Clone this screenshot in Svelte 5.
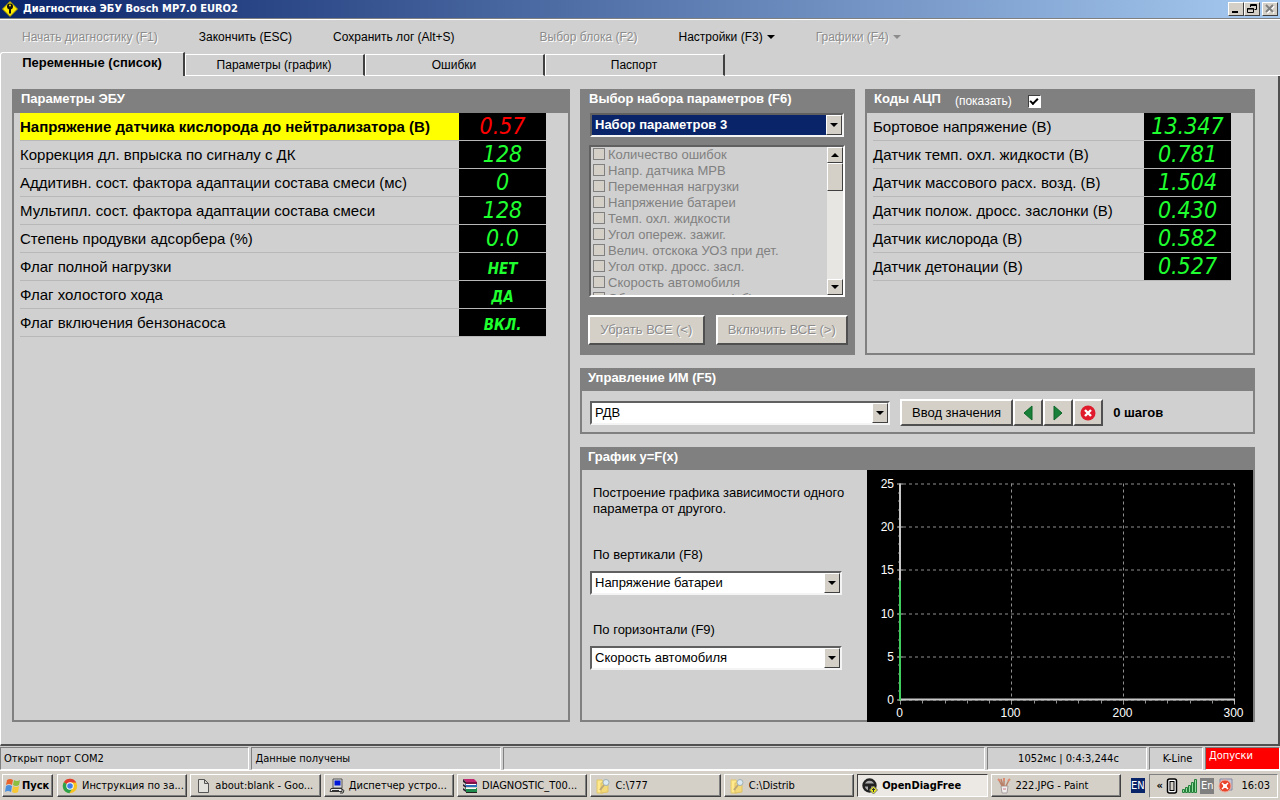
<script>
  const MENU = [
    { label: 'Начать диагностику (F1)', disabled: true },
    { label: 'Закончить (ESC)' },
    { label: 'Сохранить лог (Alt+S)' },
    { label: 'Выбор блока (F2)', disabled: true, group: true },
    { label: 'Настройки (F3)', arrow: true },
    { label: 'Графики (F4)', disabled: true, arrow: true },
  ];

  const TABS = ['Переменные (список)', 'Параметры (график)', 'Ошибки', 'Паспорт'];

  const PARAMS = [
    { name: 'Напряжение датчика кислорода до нейтрализатора (В)', value: '0.57', alert: true },
    { name: 'Коррекция дл. впрыска по сигналу с ДК', value: '128' },
    { name: 'Аддитивн. сост. фактора адаптации состава смеси (мс)', value: '0' },
    { name: 'Мультипл. сост. фактора адаптации состава смеси', value: '128' },
    { name: 'Степень продувки адсорбера (%)', value: '0.0' },
    { name: 'Флаг полной нагрузки', value: 'НЕТ', word: true },
    { name: 'Флаг холостого хода', value: 'ДА', word: true },
    { name: 'Флаг включения бензонасоса', value: 'ВКЛ.', word: true },
  ];

  const ADC = [
    { name: 'Бортовое напряжение (В)', value: '13.347' },
    { name: 'Датчик темп. охл. жидкости (В)', value: '0.781' },
    { name: 'Датчик массового расх. возд. (В)', value: '1.504' },
    { name: 'Датчик полож. дросс. заслонки (В)', value: '0.430' },
    { name: 'Датчик кислорода (В)', value: '0.582' },
    { name: 'Датчик детонации (В)', value: '0.527' },
  ];

  const CHANNELS = [
    'Количество ошибок',
    'Напр. датчика МРВ',
    'Переменная нагрузки',
    'Напряжение батареи',
    'Темп. охл. жидкости',
    'Угол опереж. зажиг.',
    'Велич. отскока УОЗ при дет.',
    'Угол откр. дросс. засл.',
    'Скорость автомобиля',
    'Обороты двигателя (об)',
  ];

  const TASKS = [
    { icon: 'chrome', label: 'Инструкция по за...' },
    { icon: 'page', label: 'about:blank - Goo...' },
    { icon: 'computer', label: 'Диспетчер устро...' },
    { icon: 'rar', label: 'DIAGNOSTIC_T00...' },
    { icon: 'folder', label: 'C:\\777' },
    { icon: 'folder', label: 'C:\\Distrib' },
    { icon: 'wheel', label: 'OpenDiagFree', active: true },
    { icon: 'paint', label: '222.JPG - Paint' },
  ];

  const Y_TICKS = [0, 5, 10, 15, 20, 25];
  const X_TICKS = [0, 100, 200, 300];
  const yPos = v => Math.round(229 - v * 8.64) + 0.5;
  const xPos = v => Math.round(33 + v * 1.114) + 0.5;

  let tab = $state(0);
  let showAdc = $state(true);
</script>

{#snippet icon(kind)}
  <svg class="icon" width="16" height="16" viewBox="0 0 16 16" aria-hidden="true">
    {#if kind === 'chrome'}
      <circle cx="8" cy="8" r="7.2" fill="#f9c31f" />
      <path d="M8 8L1.8 4.3A7.2 7.2 0 0 1 14.3 4.6H8z" fill="#e03c31" />
      <path d="M8 8L1.8 4.3A7.2 7.2 0 0 0 7.3 15.2L10.8 9.8z" fill="#2da14c" />
      <circle cx="8" cy="8" r="3.7" fill="#fff" />
      <circle cx="8" cy="8" r="2.8" fill="#3f7ee8" />
    {:else if kind === 'page'}
      <path d="M3.5 1.5h6l4 4v9h-10zM9.5 1.5v4h4" fill="#e4e2dc" stroke="#555" />
    {:else if kind === 'computer'}
      <path d="M4 1h9v9H4z" fill="#d8d8d8" stroke="#555" />
      <path d="M5.5 2.5h6v5h-6z" fill="#0018d8" />
      <path d="M2 10.5h11v3H1z" fill="#eee" stroke="#333" />
      <path d="M3 12.5h7M12 10.5l3 2-1 2.5h-3" fill="none" stroke="#333" />
    {:else if kind === 'rar'}
      <path d="M1 1h11l3 3H4z" fill="#c2246f" />
      <path d="M4 4h11v2H4z" fill="#7d1549" />
      <path d="M3 6h12v3H4z" fill="#2a6fb8" /><path d="M4 6h10v1H4z" fill="#fff" />
      <path d="M3 10h12v4H4z" fill="#1e8a4c" /><path d="M4 10h10v1H4z" fill="#fff" />
      <path d="M1 1l3 3v2L1 4zM1 6l3 2v2L1 8zM1 10l3 2v2l-3-2z" fill="#2a2030" />
      <path d="M4 14.500h11" stroke="#222" />
    {:else if kind === 'folder'}
      <path d="M2 2h5l1 2v11H2z" fill="#ffe98c" stroke="#e2c765" />
      <path d="M6 5l7-1v10l-7 1z" fill="#f3d977" stroke="#dfc269" />
      <circle cx="11" cy="4.5" r="3" fill="#dbeaf2" stroke="#9fb0b6" />
      <path d="M9 7l-4 5" stroke="#bba777" stroke-width="2" />
    {:else if kind === 'wheel'}
      <circle cx="7.5" cy="7.5" r="6" fill="#aaa" stroke="#222" stroke-width="2.4" />
      <path d="M2 7h11M7.5 8v5" stroke="#222" stroke-width="3" />
      <path d="M11.5 8l4 4-4 4-4-4z" fill="#e7e820" stroke="#777" />
      <path d="M11.5 10v4M10 11.5h3" stroke="#333" />
    {:else if kind === 'paint'}
      <path d="M5 8h7l-1 7H6z" fill="#f1eeee" stroke="#a8a0a0" />
      <path d="M6 8L3 2M8 8V1M10 8l3-6M7 8L5 1" stroke="#b9806a" stroke-width="1.5" />
      <path d="M2 1l2 2M8 0v3M14 1l-2 2" stroke="#dd8b70" stroke-width="2" />
      <path d="M7 11h3" stroke="#cc7788" />
    {/if}
  </svg>
{/snippet}

{#snippet readings(rows)}
  <table class="readings">
    <tbody>
      {#each rows as r}
        <tr class:alert={r.alert}>
          <th scope="row">{r.name}</th>
          <td class:word={r.word}>{r.value}</td>
        </tr>
      {/each}
    </tbody>
  </table>
{/snippet}

{#snippet combo(id, value)}
  <div class="combo">
    <select {id}><option>{value}</option></select>
    <span class="drop"><i class="down"></i></span>
  </div>
{/snippet}

<div class="window">
  <header class="titlebar">
    <svg width="16" height="16" viewBox="0 0 16 16" aria-hidden="true">
      <path d="M8 .5L15.5 8 8 15.5.5 8z" fill="#ffea00" stroke="#a79a00" />
      <circle cx="8" cy="5.500" r="3" fill="#111" />
      <path d="M7 7h2v5l-1 1-1-1z" fill="#111" />
      <circle cx="8" cy="4.500" r="1" fill="#ffea00" />
    </svg>
    <h1>Диагностика ЭБУ Bosch MP7.0 EURO2</h1>
    <div class="winbtns">
      <button aria-label="Свернуть"><svg width="12" height="10"><path d="M2 8h6" stroke="#000" stroke-width="2" /></svg></button>
      <button aria-label="Восстановить">
        <svg width="12" height="10"><path d="M4.500 3V.5h6v5H8.500M4 1.500h7M1.500 4.500h6v4h-6zM1 5h7" fill="none" stroke="#000" /></svg>
      </button>
      <button class="close" aria-label="Закрыть" disabled>
        <svg width="12" height="10"><path d="M3 2l7 7M10 2L3 9" stroke="#fff" stroke-width="2" /><path d="M2 1l7 7M9 1L2 8" stroke="#808080" stroke-width="2" /></svg>
      </button>
    </div>
  </header>

  <nav class="menu">
    {#each MENU as m}
      <button class:group={m.group} disabled={m.disabled}>
        {m.label}{#if m.arrow}<i class="down"></i>{/if}
      </button>
    {/each}
  </nav>

  <div class="tabs" role="tablist">
    {#each TABS as t, i}
      <button role="tab" aria-selected={tab === i} class:current={tab === i} onclick={() => (tab = i)}>{t}</button>
    {/each}
    <span class="rest"></span>
  </div>

  <main>
    <section class="panel params">
      <h2>Параметры ЭБУ</h2>
      {@render readings(PARAMS)}
    </section>

    <div class="side">
      <div class="top">
        <section class="panel picker">
          <h2><label for="preset">Выбор набора параметров (F6)</label></h2>
          <div class="preset">{@render combo('preset', 'Набор параметров 3')}</div>
          <div class="listbox">
            <ul>
              {#each CHANNELS as c}
                <li><label><input type="checkbox" disabled />{c}</label></li>
              {/each}
            </ul>
            <div class="scroll">
              <span class="knob"><i class="up"></i></span>
              <span class="thumb"></span>
              <span class="knob end"><i class="down"></i></span>
            </div>
          </div>
          <div class="pair">
            <button class="btn" disabled>Убрать ВСЕ (&lt;)</button>
            <button class="btn" disabled>Включить ВСЕ (&gt;)</button>
          </div>
        </section>

        <section class="panel adc">
          <h2>Коды АЦП <label>(показать) <input type="checkbox" bind:checked={showAdc} /></label></h2>
          {#if showAdc}{@render readings(ADC)}{/if}
        </section>
      </div>

      <section class="panel control">
        <h2><label for="actuator">Управление ИМ (F5)</label></h2>
        <div class="actuator">
          {@render combo('actuator', 'РДВ')}
          <div class="buttons">
            <button class="btn">Вво<u>д</u> значения</button>
            <button class="btn sq" aria-label="Меньше"><svg width="16" height="16"><path d="M12 1v14L4 8z" fill="#188038" stroke="#0d6728" /></svg></button>
            <button class="btn sq" aria-label="Больше"><svg width="16" height="16"><path d="M4 1v14l8-7z" fill="#188038" stroke="#0d6728" /></svg></button>
            <button class="btn sq" aria-label="Стоп">
              <svg width="16" height="16"><circle cx="8" cy="8" r="7.500" fill="#e01b2c" /><path d="M5 5l6 6M11 5l-6 6" stroke="#fff" stroke-width="2.400" /></svg>
            </button>
          </div>
          <output>0 шагов</output>
        </div>
      </section>

      <section class="panel graph">
        <h2>График y=F(x)</h2>
        <div class="plot">
          <div class="axes">
            <p>Построение графика зависимости одного параметра от другого.</p>
            <label for="vert">По вертикали (F8)</label>
            {@render combo('vert', 'Напряжение батареи')}
            <label for="horiz">По горизонтали (F9)</label>
            {@render combo('horiz', 'Скорость автомобиля')}
          </div>
          <div class="chart">
            <svg viewBox="0 0 386 251" role="img" aria-label="График y=F(x)">
              {#each Y_TICKS as v}
                <path d="M30 {yPos(v)}h6" stroke="#c0c0c0" />
                <path d="M36 {yPos(v)}H367" stroke="#909090" stroke-dasharray="3 3" />
                <text x="27" y={yPos(v) + 4} text-anchor="end">{v}</text>
              {/each}
              {#each X_TICKS as v}
                {#if v}<path d="M{xPos(v)} 13V229" stroke="#909090" stroke-dasharray="3 3" />{/if}
                <path d="M{xPos(v)} 229v5" stroke="#c0c0c0" />
                <text x={xPos(v) - 1} y="246" text-anchor="middle">{v}</text>
              {/each}
              {#each { length: 25 } as _, i}
                <path d="M31 {yPos(i)}h2" stroke="#909090" />
              {/each}
              {#each { length: 15 } as _, i}
                <path d="M{xPos(i * 20)} 230v3" stroke="#909090" />
              {/each}
              <path d="M33 13V229H368" fill="none" stroke="#c8c8c8" stroke-width="2" />
              <path d="M33 110V230" stroke="#3ecf5c" stroke-width="2" />
            </svg>
          </div>
        </div>
      </section>
    </div>
  </main>

  <footer class="status">
    <span class="s1">Открыт порт COM2</span>
    <span class="s1">Данные получены</span>
    <span class="s2"></span>
    <span class="timing">1052мс | 0:4:3,244с</span>
    <span class="line">K-Line</span>
    <span class="limits">Допуски</span>
  </footer>

  <div class="taskbar">
    <button class="task start">
      <svg class="icon" width="16" height="16" viewBox="0 0 16 16" aria-hidden="true">
        <path d="M2 2q3-2 6 0L7 7Q4 5 1 7z" fill="#e8642c" />
        <path d="M9 2q3 2 6 0l-1 5q-3 2-6 0z" fill="#8cbf3f" />
        <path d="M1 8q3-2 6 0l-1 6q-3-2-6 0z" fill="#4a8fdc" />
        <path d="M8 8q3 2 6 0l-1 6q-3 2-6 0z" fill="#f7c734" />
      </svg>
      Пуск
    </button>
    <div class="tasks">
      {#each TASKS as t}
        <button class="task" class:active={t.active}>{@render icon(t.icon)}<span>{t.label}</span></button>
      {/each}
    </div>
    <span class="lang">EN</span>
    <div class="tray">
      <span class="more">«</span>
      <svg width="12" height="16"><rect x="1.500" y="1" width="9" height="14" rx="2" fill="#fff" stroke="#000" stroke-width="1.500" /><rect x="4" y="3.500" width="4" height="9" fill="#d4d0c8" stroke="#000" /></svg>
      <svg width="16" height="14">
        <path d="M1.500 10.500h2v3h-2zM4.500 8.500h2v5h-2zM7.500 6.500h2v7h-2zM10.500 3.500h2v10h-2zM13.500.500h2v13h-2z" fill="#8fdc9c" stroke="#25803b" />
      </svg>
      <span class="kb">En</span>
      <svg width="17" height="16"><path d="M3 1h12v11H3z" fill="#c8c8d8" stroke="#8888a0" /><circle cx="8" cy="8" r="6" fill="#e8452c" stroke="#f3a595" /><path d="M5 5l6 6M11 5l-6 6" stroke="#fff" stroke-width="1.500" /><circle cx="8" cy="8" r="2" fill="#fff" /></svg>
      <time>16:03</time>
    </div>
  </div>
</div>

<style>
  :global(body) { margin: 0; background: #d0d0d0; }
  .window {
    display: flex; flex-direction: column; min-height: 100vh;
    font: 12px/16px "Liberation Sans", Arial, sans-serif; color: #000; background: #d0d0d0;
  }
  button, select, input { font: inherit; color: inherit; box-sizing: border-box; margin: 0; }
  button { cursor: pointer; }
  svg { display: block; flex: none; }
  h1, h2, p, ul { margin: 0; padding: 0; }

  .down, .up { display: inline-block; border: 4px solid transparent; border-bottom-width: 0; border-top-color: currentColor; }
  .up { border-width: 0 4px 4px; border-color: transparent; border-bottom-color: currentColor; }

  .titlebar {
    display: flex; align-items: center; gap: 5px; height: 18px; padding: 0 2px;
    background: linear-gradient(90deg, #0a246a, #a6caf0); border-bottom: 1px solid #808080;
  }
  h1 { flex: 1; font: bold 11px/18px "DejaVu Sans Condensed", "DejaVu Sans", Tahoma, sans-serif; color: #fff; }
  .winbtns { display: flex; }
  .winbtns button {
    width: 16px; height: 14px; padding: 1px; background: #d4d0c8;
    border: 1px solid; border-color: #fff #404040 #404040 #fff;
  }
  .winbtns .close { margin-left: 2px; }

  .menu { display: flex; align-items: center; gap: 41px; height: 33px; padding: 1px 22px 0; border-top: 1px solid #fff; box-sizing: border-box; }
  .menu button { padding: 0; border: 0; background: none; white-space: nowrap; }
  .menu .group { margin-left: 44px; }
  .menu .down { margin-left: 4px; vertical-align: 2px; }
  button:disabled { color: #8c8c8c; text-shadow: 1px 1px #fff; cursor: default; }

  .tabs { display: flex; align-items: flex-end; height: 24px; }
  .tabs button {
    width: 180px; height: 22px; padding: 0; background: none;
    border: solid; border-width: 1px 2px 1px 0; border-color: #fff #404040 #fff #fff;
    box-shadow: inset 1px 0 #fff;
  }
  .tabs .current { width: 185px; height: 24px; padding-bottom: 4px; border-width: 1px 2px 0 1px; border-radius: 3px 0 0; font-weight: bold; font-size: 13px; box-shadow: none; }
  .tabs .rest { flex: 1; border-bottom: 1px solid #fff; }

  main {
    display: grid; grid-template-columns: 558fr 675fr; flex: 1; gap: 10px; padding: 13px 23px 22px 11px;
    border: solid; border-width: 0 2px 2px 1px; border-color: #fff #505050 #505050 #fff;
  }
  .panel { border: 2px solid #808080; box-sizing: border-box; min-width: 0; }
  h2 { height: 22px; padding-left: 7px; background: #808080; color: #fff; font: bold 13px/15px "Liberation Sans", Arial, sans-serif; }
  .side { display: flex; flex-direction: column; gap: 13px; min-width: 0; }
  .top { display: grid; grid-template-columns: 275fr 390fr; gap: 10px; }
  .picker { background: #808080; }
  .adc h2 { display: flex; gap: 14px; }
  .adc h2 label { display: flex; align-items: center; gap: 16px; height: 20px; font-weight: normal; font-size: 12px; }

  .readings { width: calc(100% - 28px); margin-left: 6px; border-collapse: collapse; }
  .readings th {
    height: 27px; padding: 0; text-align: left; white-space: nowrap;
    font-size: 15px; font-weight: normal; border-bottom: 1px solid #b8b8b8;
  }
  .readings td {
    width: 87px; height: 27px; padding: 0; text-align: center; background: #000; color: #1fff2f;
    font: italic 23px/27px "DejaVu Sans Condensed", "DejaVu Sans", sans-serif; border-bottom: 1px solid #b8b8b8;
  }
  .readings td.word { height: 21px; padding-top: 6px; font-size: 15px; line-height: 21px; font-weight: bold; }
  .readings .alert th { background: #ff0; font-weight: bold; }
  .readings .alert td { color: #f00; }

  .combo { position: relative; display: flex; }
  .combo select {
    appearance: none; flex: 1; width: 100%; height: 24px; padding: 0 20px 0 3px; font-size: 13px; background: #fff;
    border: 2px solid; border-color: #606060 #f4f4f4 #f4f4f4 #606060; border-radius: 0; outline: 0;
  }
  .drop {
    position: absolute; top: 2px; right: 2px; bottom: 2px; display: flex; align-items: center; justify-content: center;
    width: 14px; background: #d4d0c8; border: 1px solid; border-color: #fff #404040 #404040 #fff; pointer-events: none;
  }
  .preset { padding: 0 9px 0 8px; }
  .preset select { color: #fff; font-weight: bold; background: #0a246a; }

  .listbox {
    display: flex; height: 148px; margin: 8px 8px 0 7px; background: #d0d0d0; overflow: hidden;
    border: 2px solid; border-color: #606060 #fff #fff #606060;
  }
  .listbox ul { flex: 1; list-style: none; padding-left: 2px; overflow: hidden; }
  .listbox li { height: 16px; color: #808080; font-size: 13px; }
  .listbox label { display: flex; gap: 3px; }
  .listbox input { appearance: none; width: 12px; height: 12px; margin-top: 1px; border: 1px solid #808080; background: #d4d0c8; }
  .scroll { display: flex; flex-direction: column; width: 16px; background: #e8e6e2; }
  .knob, .thumb {
    display: flex; align-items: center; justify-content: center; height: 14px;
    background: #d4d0c8; border: 1px solid; border-color: #fff #404040 #404040 #fff;
  }
  .thumb { height: 26px; }
  .end { margin-top: auto; }

  .btn {
    height: 30px; padding: 0 10px; font-size: 13px; background: #d4d0c8; white-space: nowrap;
    border: 2px solid; border-color: #fff #505050 #505050 #fff; border-radius: 0;
  }
  .pair { display: flex; gap: 11px; margin: 18px 5px 8px 6px; }
  .pair .btn { flex: 1 1 auto; }

  .adc input {
    appearance: none; display: grid; place-items: center; width: 13px; height: 13px; background: #fff;
    border: 1px solid; border-color: #404040 #fff #fff #404040;
  }
  .adc input:checked::before { content: ""; width: 6px; height: 3px; margin-bottom: 2px; border: solid #000; border-width: 0 0 2px 2px; rotate: -45deg; }

  .control h2, .graph h2 { height: 21px; padding-left: 6px; }
  .actuator { display: flex; align-items: center; gap: 10px; padding: 8px 8px 6px; }
  .actuator .combo { width: 300px; }
  .buttons { display: flex; }
  .actuator .btn { height: 27px; }
  .sq { display: flex; align-items: center; justify-content: center; width: 30px; }
  .actuator .btn.sq { padding: 0; }
  output { font-weight: bold; font-size: 13px; }

  .graph { display: flex; flex-direction: column; flex: 1; }
  .plot { display: grid; grid-template-columns: 285fr 386fr; flex: 1; }
  .axes { padding: 15px 0 0 8px; min-width: 0; }
  .axes p, .axes label { display: block; padding-left: 3px; font-size: 13px; }
  .axes p { margin-bottom: 30px; }
  .axes .combo { max-width: 252px; margin: 8px 0 27px; }
  .chart { display: flex; min-width: 0; margin-bottom: -2px; background: #000; }
  .chart svg { width: 100%; height: 100%; flex: 1; }
  text { fill: #fff; font: 12px "Liberation Sans", Arial, sans-serif; }

  .status, .taskbar { font: 11px/16px "DejaVu Sans Condensed", "DejaVu Sans", Tahoma, sans-serif; }
  .status { display: flex; gap: 2px; height: 23px; padding-top: 1px; }
  .status span { padding-left: 3px; line-height: 21px; box-sizing: border-box; border: 1px solid; border-color: #808080 #fff #fff #808080; white-space: nowrap; }
  .s1 { flex: 249 1 0; }
  .s2 { flex: 486 1 0; }
  .timing { width: 160px; text-align: center; }
  .line { width: 54px; text-align: center; }
  .status .limits { width: 75px; color: #fff; background: #f00; line-height: 16px; }

  .taskbar { display: flex; align-items: center; gap: 4px; height: 30px; padding: 0 2px; background: #d4d0c8; border-top: 1px solid #fff; box-sizing: border-box; }
  .task {
    display: flex; align-items: center; gap: 4px; height: 23px; padding: 0 4px; background: #d4d0c8; white-space: nowrap;
    border: 1px solid; border-color: #fff #404040 #404040 #fff; box-shadow: inset -1px -1px #808080;
  }
  .start { width: 51px; padding: 0 2px; gap: 1px; font-weight: bold; }
  .tasks { display: flex; flex: 1; gap: 3px; min-width: 0; }
  .tasks .task { flex: 1 1 0; min-width: 0; overflow: hidden; }
  .tasks .active { background: #ece9e4; font-weight: bold; border-color: #404040 #fff #fff #404040; box-shadow: none; }
  .lang { margin-left: 6px; line-height: 15px; color: #fff; background: #0a246a; }
  .tray { display: flex; align-items: center; gap: 3px; height: 22px; padding: 0 7px; border: 1px solid; border-color: #808080 #fff #fff #808080; }
  .more { font-weight: bold; }
  .kb { padding: 0 1px; color: #fff; background: #808080; }
  time { margin-left: 4px; }
</style>
